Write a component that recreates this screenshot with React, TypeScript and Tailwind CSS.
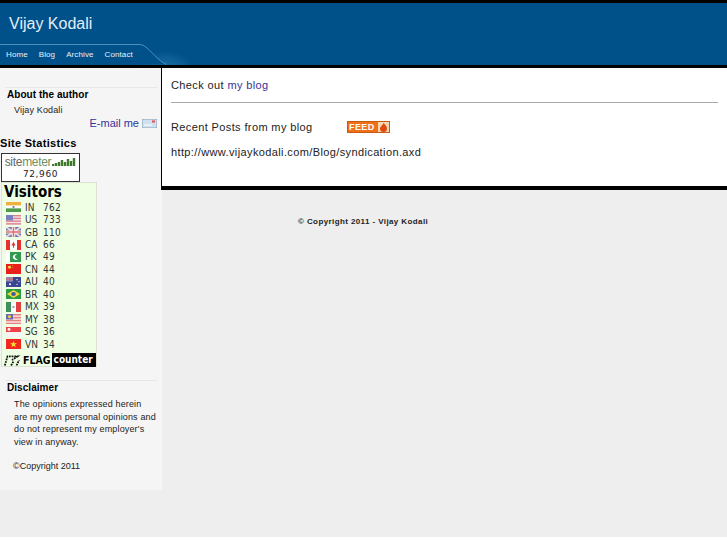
const flags = [
  { code: 'IN', count: 762, flag: 'in' },
  { code: 'US', count: 733, flag: 'us' },
  { code: 'GB', count: 110, flag: 'gb' },
  { code: 'CA', count: 66, flag: 'ca' },
  { code: 'PK', count: 49, flag: 'pk' },
  { code: 'CN', count: 44, flag: 'cn' },
  { code: 'AU', count: 40, flag: 'au' },
  { code: 'BR', count: 40, flag: 'br' },
  { code: 'MX', count: 39, flag: 'mx' },
  { code: 'MY', count: 38, flag: 'my' },
  { code: 'SG', count: 36, flag: 'sg' },
  { code: 'VN', count: 34, flag: 'vn' },
];

function Flag({ name }: { name: string }) {
  return (
    <svg width="15" height="10" viewBox="0 0 15 11" preserveAspectRatio="none" className="block">
      {name === 'in' && (
        <>
          <rect width="15" height="4" fill="#f0b040" />
          <rect y="4" width="15" height="3" fill="#fff" />
          <rect y="7" width="15" height="4" fill="#4f9a4f" />
          <circle cx="7.5" cy="5.5" r="1.2" fill="#7a7aa8" />
        </>
      )}
      {name === 'us' && (
        <>
          <rect width="15" height="11" fill="#f0e4ea" />
          <rect width="15" height="1.5" fill="#e08088" />
          <rect y="3" width="15" height="1.5" fill="#e08088" />
          <rect y="6" width="15" height="1.5" fill="#e08088" />
          <rect y="9" width="15" height="1.5" fill="#e08088" />
          <rect width="7" height="6" fill="#7a80c0" />
        </>
      )}
      {name === 'gb' && (
        <>
          <rect width="15" height="11" fill="#6a74b4" />
          <path d="M0 0L15 11M15 0L0 11" stroke="#f0d8d8" strokeWidth="2" />
          <path d="M7.5 0V11M0 5.5H15" stroke="#f4f4f4" strokeWidth="3.5" />
          <path d="M7.5 0V11M0 5.5H15" stroke="#e07070" strokeWidth="1.5" />
        </>
      )}
      {name === 'ca' && (
        <>
          <rect width="15" height="11" fill="#fff" />
          <rect width="4" height="11" fill="#e83030" />
          <rect x="11" width="4" height="11" fill="#e83030" />
          <path d="M7.5 2L9.5 6L8 6V8.5H7V6L5.5 6Z" fill="#e83030" />
        </>
      )}
      {name === 'pk' && (
        <>
          <rect width="4" height="11" fill="#fff" />
          <rect x="4" width="11" height="11" fill="#2f9a4f" />
          <path d="M11.5 2.5A3.2 3.2 0 1 0 12.5 7.5A2.6 2.6 0 1 1 11.5 2.5Z" fill="#fff" />
        </>
      )}
      {name === 'cn' && (
        <>
          <rect width="15" height="11" fill="#e8201c" />
          <circle cx="3.5" cy="3.5" r="1.6" fill="#f0d040" />
          <circle cx="6.5" cy="1.5" r="0.5" fill="#f0d040" />
          <circle cx="7" cy="4" r="0.5" fill="#f0d040" />
        </>
      )}
      {name === 'au' && (
        <>
          <rect width="15" height="11" fill="#3a4694" />
          <rect width="7" height="5" fill="#9a8ab0" />
          <path d="M3.5 0V5M0 2.5H7" stroke="#d86a70" strokeWidth="1" />
          <circle cx="11" cy="3" r="0.7" fill="#fff" />
          <circle cx="13" cy="5" r="0.7" fill="#fff" />
          <circle cx="11" cy="8" r="0.7" fill="#fff" />
          <circle cx="4" cy="8" r="1" fill="#fff" />
        </>
      )}
      {name === 'br' && (
        <>
          <rect width="15" height="11" fill="#2f9a3f" />
          <path d="M7.5 1L14 5.5L7.5 10L1 5.5Z" fill="#f0d840" />
          <circle cx="7.5" cy="5.5" r="2.3" fill="#3a5aa0" />
        </>
      )}
      {name === 'mx' && (
        <>
          <rect width="5" height="11" fill="#3f8f5f" />
          <rect x="5" width="5" height="11" fill="#fff" />
          <rect x="10" width="5" height="11" fill="#e04040" />
          <circle cx="7.5" cy="5.5" r="1.2" fill="#9a9a70" />
        </>
      )}
      {name === 'my' && (
        <>
          <rect width="15" height="11" fill="#f8e8e8" />
          <rect width="15" height="1.6" fill="#e88080" />
          <rect y="3.2" width="15" height="1.6" fill="#e88080" />
          <rect y="6.4" width="15" height="1.6" fill="#e88080" />
          <rect y="9.6" width="15" height="1.4" fill="#e88080" />
          <rect width="7" height="6" fill="#6a6ab4" />
          <circle cx="3.5" cy="3" r="1.6" fill="#f0d040" />
        </>
      )}
      {name === 'sg' && (
        <>
          <rect width="15" height="5.5" fill="#f04048" />
          <rect y="5.5" width="15" height="5.5" fill="#f4f4f4" />
          <circle cx="3" cy="2.7" r="1.5" fill="#fff" />
        </>
      )}
      {name === 'vn' && (
        <>
          <rect width="15" height="11" fill="#f02820" />
          <path d="M7.5 2.2L8.4 4.8L11 4.8L8.9 6.4L9.7 9L7.5 7.4L5.3 9L6.1 6.4L4 4.8L6.6 4.8Z" fill="#f8e030" />
        </>
      )}
    </svg>
  );
}

function SidebarTitle({ children }: { children: string }) {
  return (
    <h3 className="border-t border-[#e6e6e6] pl-[2px] text-[10px] leading-[13px] font-bold tracking-[0.05px] text-black">
      {children}
    </h3>
  );
}

export default function App() {
  return (
    <div className="min-h-[537px] bg-[#eeeeee] font-['Liberation_Sans',Arial,sans-serif] text-[#222]">
      <header className="h-[68px] border-t-[3px] border-b-[3px] border-black bg-[#00508a]">
        <div className="relative h-full">
          <svg className="absolute bottom-0 left-0" width="240" height="21" viewBox="0 0 240 21">
            <defs>
              <radialGradient id="glow" cx="0.5" cy="0.8" r="0.5">
                <stop offset="0" stopColor="#2f7fb4" stopOpacity="0.7" />
                <stop offset="1" stopColor="#2f7fb4" stopOpacity="0" />
              </radialGradient>
            </defs>
            <ellipse cx="165" cy="14" rx="28" ry="18" fill="url(#glow)" />
            <path d="M0 1H140C148 1 154 14 166 20.5H0Z" fill="#00508a" />
            <path d="M0 0.5H140C148 1 154 14 166 20.5" fill="none" stroke="#4f8fbc" strokeWidth="1" />
          </svg>
          <div className="relative pl-[9px] pt-[11px] text-base leading-[20px] text-[#e4eef6]">Vijay Kodali</div>
          <nav className="absolute bottom-0 left-0 flex h-[20px] w-full items-center gap-[11px] pl-[6px] text-[8px] tracking-[0.1px] text-[#e8f0f6]">
            <a>Home</a>
            <a>Blog</a>
            <a>Archive</a>
            <a>Contact</a>
          </nav>
        </div>
      </header>

      <div className="flex items-start">
        <aside className="h-[422px] w-[162px] shrink-0 bg-[#f5f5f5]">
          <div className="ml-[5px] mr-[5px] mt-[19px]">
            <SidebarTitle>About the author</SidebarTitle>
            <p className="pl-[9px] pt-[3px] text-[9px] leading-[13px] tracking-[0.15px]">Vijay Kodali</p>
            <div className="flex items-center justify-end gap-[3px] text-[11px] leading-[13px] text-[#333399]">
              <a>E-mail me</a>
              <svg width="15" height="9" viewBox="0 0 15 9">
                <rect width="15" height="9" fill="#cfe0f0" stroke="#8aa0b8" />
                <rect x="10" y="1.5" width="3" height="2" fill="#e05050" />
                <path d="M2 6H10" stroke="#fff" />
              </svg>
            </div>
          </div>

          <h3 className="pt-[6px] text-[11px] leading-[14px] font-bold tracking-[0.3px] text-black">Site Statistics</h3>
          <div className="ml-[1px] mt-[3px] flex h-[29px] w-[79px] flex-col items-center border border-[#333] bg-white">
            <div className="flex h-[15px] items-center font-['Liberation_Sans',sans-serif] text-[12px] tracking-[-0.3px] text-[#666]">
              site<span className="text-[#6f8f5f]">meter</span>
              <svg width="24" height="10" viewBox="0 0 24 10" className="ml-[1px]">
                <path d="M1 9V7M4 9V6M7 9V5M10 9V3M13 9V5M16 9V2M19 9V4M22 9V1" stroke="#3f7a2a" strokeWidth="2.4" />
              </svg>
            </div>
            <div className="font-['DejaVu_Sans',sans-serif] text-[9px] leading-[11px] tracking-[0.6px] text-[#222]">72,960</div>
          </div>

          <div className="ml-[1px] h-[185px] w-[96px] border border-[#dde3d4] bg-[#eeffe4] font-['DejaVu_Sans_Condensed','DejaVu_Sans',sans-serif]">
            <div className="pl-[2px] pt-[1px] text-[15px] leading-[17px] font-bold text-black">Visitors</div>
            <ul className="pl-[4px]">
              {flags.map((f) => (
                <li key={f.code} className="flex h-[12.45px] items-center text-[10px] text-[#333]">
                  <Flag name={f.flag} />
                  <span className="ml-[4px] w-[18px]">{f.code}</span>
                  <span className="tracking-[0.3px]">{f.count}</span>
                </li>
              ))}
            </ul>
            <div className="mt-[3px] flex h-[14px] items-center">
              <svg width="18" height="13" viewBox="0 0 20 13" className="ml-[1px] shrink-0">
                <path d="M2 12L5 2H16L10 6M9 12L12 7M15 12L18 6" fill="none" stroke="#111" strokeWidth="2" strokeDasharray="2 1" />
              </svg>
              <span className="ml-[2px] text-[10.5px] leading-[14px] font-bold text-black">FLAG</span>
              <span className="ml-[1px] flex-1 overflow-hidden bg-black pl-[2px] text-[10px] leading-[14px] font-bold text-white">counter</span>
            </div>
          </div>

          <div className="ml-[5px] mr-[5px] mt-[13px]">
            <SidebarTitle>Disclaimer</SidebarTitle>
            <p className="whitespace-nowrap pl-[9px] pt-[4px] text-[9px] leading-[12.5px] tracking-[0.15px]">
              The opinions expressed herein
              <br />
              are my own personal opinions and
              <br />
              do not represent my employer's
              <br />
              view in anyway.
            </p>
            <p className="pl-[8px] pt-[12px] text-[9px] leading-[13px]">©Copyright 2011</p>
          </div>
        </aside>

        <main className="min-w-0 flex-1">
          <section className="-ml-[1px] h-[122px] border-b-[4px] border-l-[1px] border-black bg-white px-[9px] pt-[10px] text-[11px] leading-[14px] tracking-[0.38px]">
            <p>
              Check out <a className="text-[#333399]">my blog</a>
            </p>
            <hr className="mt-[10px] border-t border-[#aaaaaa]" />
            <div className="mt-[17px] flex items-center">
              <p className="w-[176px]">Recent Posts from my blog</p>
              <div className="flex h-[12px] w-[43px] items-center justify-between border border-[#c85a10] bg-[#f0701a] pl-[1px] text-[9px] font-bold leading-none tracking-[0.4px] text-white">
                FEED
                <svg width="11" height="10" viewBox="0 0 11 10">
                  <rect width="11" height="10" fill="#f8d8b0" />
                  <path d="M5.5 1C7 3 9 4 9 6.5A3.5 3.5 0 0 1 2 6.5C2 4.5 4.5 3.5 5.5 1Z" fill="#e04a10" />
                </svg>
              </div>
            </div>
            <p className="mt-[11px]">http://www.vijaykodali.com/Blog/syndication.axd</p>
          </section>
          <p className="pl-[136px] pt-[27px] text-[8px] leading-[10px] font-bold tracking-[0.4px]">© Copyright 2011 - Vijay Kodali</p>
        </main>
      </div>
    </div>
  );
}
